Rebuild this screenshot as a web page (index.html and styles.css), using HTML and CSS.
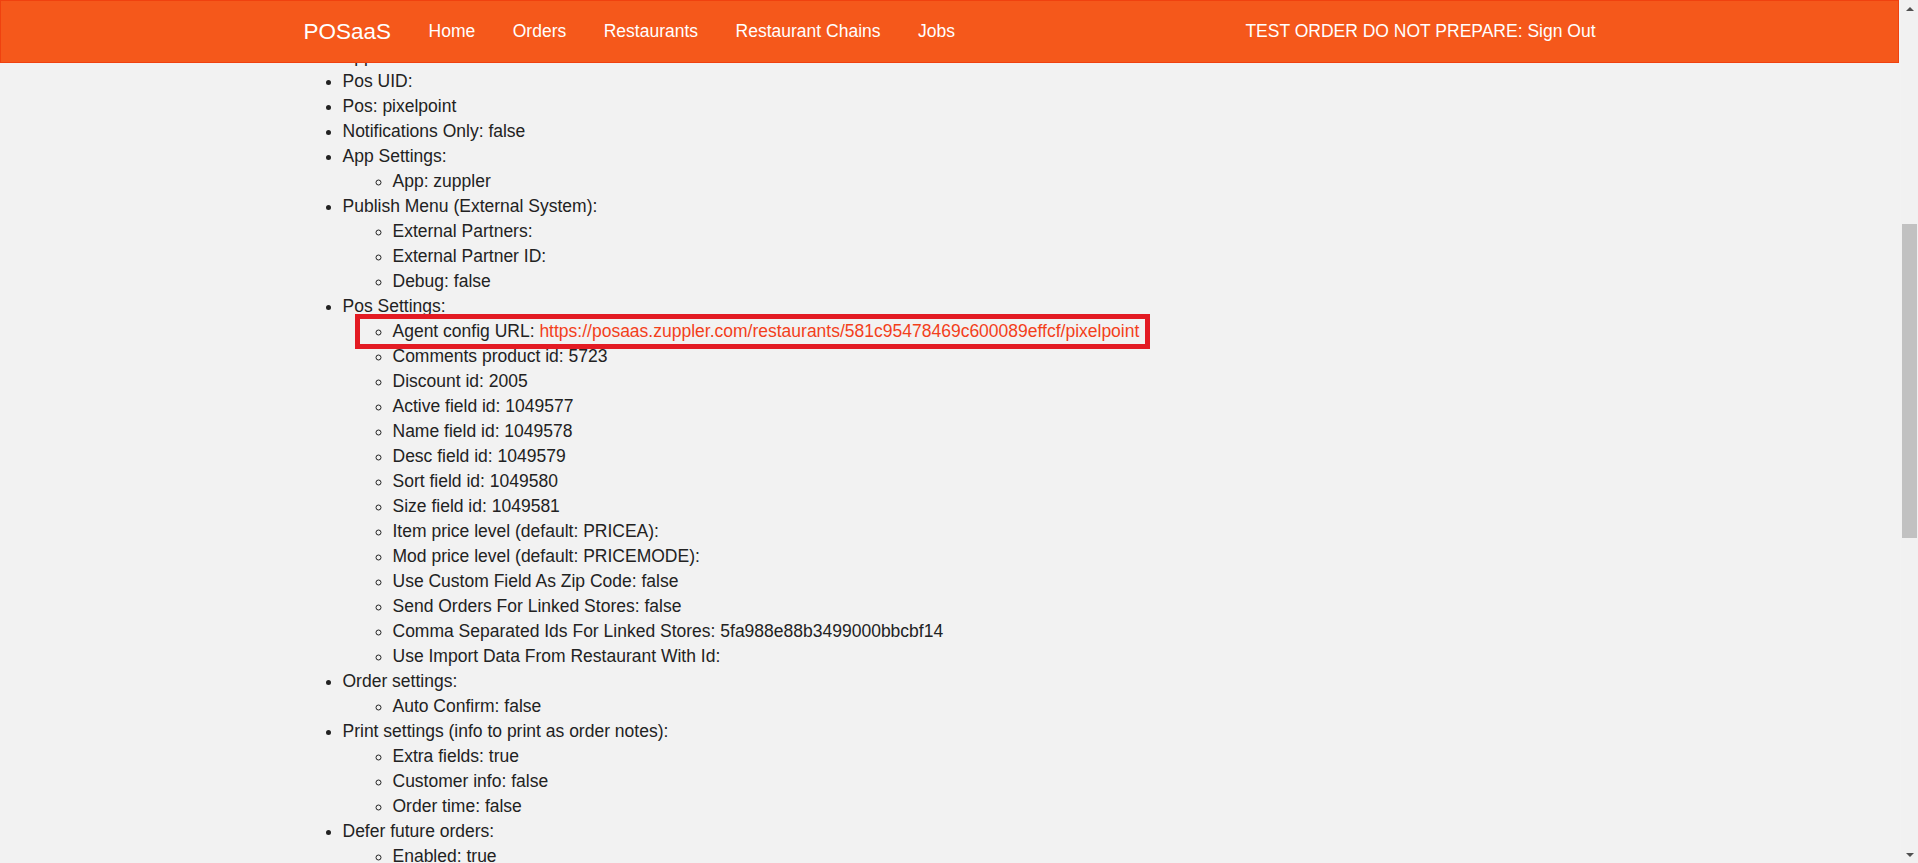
FILE: index.html
```html
<!DOCTYPE html>
<html lang="en">
<head>
    <meta charset="UTF-8">
    <meta name="viewport" content="width=device-width, initial-scale=1.0">
    <title>POSaaS - Restaurant</title>
    <link rel="stylesheet" href="styles.css">
</head>
<body>
    <div class="page">
        <nav class="navbar">
            <div class="navbar-inner">
                <a class="brand" href="#">POSaaS</a>
                <ul class="nav-links">
                    <li><a href="#">Home</a></li>
                    <li><a href="#">Orders</a></li>
                    <li><a href="#">Restaurants</a></li>
                    <li><a href="#">Restaurant Chains</a></li>
                    <li><a href="#">Jobs</a></li>
                </ul>
                <a class="nav-right" href="#">TEST ORDER DO NOT PREPARE: Sign Out</a>
            </div>
        </nav>

        <div class="content">
            <ul class="settings">
                <li>App Id:</li>
                <li>Pos UID:</li>
                <li>Pos: pixelpoint</li>
                <li>Notifications Only: false</li>
                <li>App Settings:
                    <ul>
                        <li>App: zuppler</li>
                    </ul>
                </li>
                <li>Publish Menu (External System):
                    <ul>
                        <li>External Partners:</li>
                        <li>External Partner ID:</li>
                        <li>Debug: false</li>
                    </ul>
                </li>
                <li>Pos Settings:
                    <ul>
                        <li><span class="highlight">Agent config URL: <a href="#">https://posaas.zuppler.com/restaurants/581c95478469c600089effcf/pixelpoint</a></span></li>
                        <li>Comments product id: 5723</li>
                        <li>Discount id: 2005</li>
                        <li>Active field id: 1049577</li>
                        <li>Name field id: 1049578</li>
                        <li>Desc field id: 1049579</li>
                        <li>Sort field id: 1049580</li>
                        <li>Size field id: 1049581</li>
                        <li>Item price level (default: PRICEA):</li>
                        <li>Mod price level (default: PRICEMODE):</li>
                        <li>Use Custom Field As Zip Code: false</li>
                        <li>Send Orders For Linked Stores: false</li>
                        <li>Comma Separated Ids For Linked Stores: 5fa988e88b3499000bbcbf14</li>
                        <li>Use Import Data From Restaurant With Id:</li>
                    </ul>
                </li>
                <li>Order settings:
                    <ul>
                        <li>Auto Confirm: false</li>
                    </ul>
                </li>
                <li>Print settings (info to print as order notes):
                    <ul>
                        <li>Extra fields: true</li>
                        <li>Customer info: false</li>
                        <li>Order time: false</li>
                    </ul>
                </li>
                <li>Defer future orders:
                    <ul>
                        <li>Enabled: true</li>
                    </ul>
                </li>
            </ul>
        </div>
    </div>

    <div class="scrollbar">
        <div class="sb-btn up"></div>
        <div class="sb-track"><div class="sb-thumb"></div></div>
        <div class="sb-btn down"></div>
    </div>
</body>
</html>
```

FILE: styles.css
```css
html, body {
    margin: 0;
    height: 100%;
}
body {
    display: flex;
    overflow: hidden;
    background-color: #f2f2f2;
    font-family: "Liberation Sans", Arial, sans-serif;
    font-size: 17.5px;
    line-height: 25px;
    color: #222;
}
.page {
    flex: 1;
    position: relative;
    height: 100vh;
    overflow: hidden;
}
.navbar {
    position: absolute;
    top: 0;
    left: 0;
    right: 2px;
    height: 63px;
    box-sizing: border-box;
    display: flex;
    background-color: #f5581b;
    border: 1px solid #f0410f;
    z-index: 10;
}
.navbar-inner {
    width: 1292px;
    margin: 0 auto;
    display: flex;
    align-items: center;
}
.navbar a {
    color: #fff;
    text-decoration: none;
}
.brand {
    font-size: 22.5px;
    padding-right: 18.75px;
}
.nav-links {
    display: flex;
    list-style: none;
    margin: 0;
    padding: 0;
}
.nav-links a {
    padding: 0 18.75px;
}
.nav-right {
    margin-left: auto;
}
.content {
    width: 1292px;
    margin: 0 auto;
}
.settings {
    margin: 44px 0 0;
    padding-left: 38px;
}
.settings ul {
    margin: 0;
    padding-left: 50px;
    list-style-type: circle;
}
.settings a {
    color: #f33f1b;
    text-decoration: none;
}
.highlight {
    display: inline-block;
    padding: 0 6px 0 33px;
    margin-left: -33px;
    outline: 5px solid #e31b23;
}
.scrollbar {
    width: 17px;
    display: flex;
    flex-direction: column;
    background-color: #f1f1f1;
}
.sb-btn {
    height: 17px;
    display: flex;
    align-items: center;
    justify-content: center;
}
.sb-btn::before {
    content: "";
    border-left: 4px solid transparent;
    border-right: 4px solid transparent;
    border-bottom: 4px solid #505050;
}
.sb-btn.down::before {
    border-bottom: 0;
    border-top: 4px solid #505050;
}
.sb-track {
    flex: 1;
    padding-top: 207px;
}
.sb-thumb {
    height: 314px;
    margin: 0 1px;
    background-color: #c1c1c1;
}
```
